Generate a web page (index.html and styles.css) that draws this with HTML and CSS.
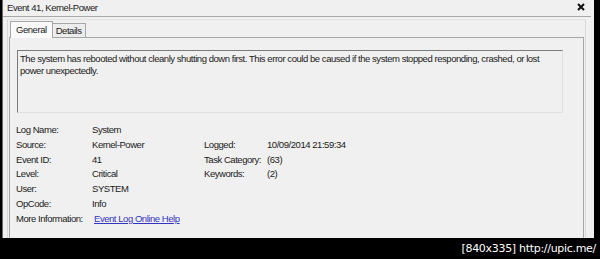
FILE: index.html
```html
<!DOCTYPE html>
<html>
<head>
<meta charset="utf-8">
<link rel="stylesheet" href="styles.css">
</head>
<body>
<div class="screen">
  <div class="window">
    <div class="titlebar">
      <span class="title">Event 41, Kernel-Power</span>
      <svg class="close" width="8" height="8" viewBox="0 0 8 8"><path d="M1 1 L7 7 M7 1 L1 7" stroke="#111" stroke-width="2"/></svg>
    </div>
    <div class="frame">
      <div class="tabs">
        <div class="tab active">General</div>
        <div class="tab">Details</div>
      </div>
      <div class="panel">
        <div class="desc">The system has rebooted without cleanly shutting down first. This error could be caused if the system stopped responding, crashed, or lost power unexpectedly.</div>
        <div class="info">
          <span>Log Name:</span><span>System</span><span></span><span></span>
          <span>Source:</span><span>Kernel-Power</span><span>Logged:</span><span>10/09/2014 21:59:34</span>
          <span>Event ID:</span><span>41</span><span>Task Category:</span><span>(63)</span>
          <span>Level:</span><span>Critical</span><span>Keywords:</span><span>(2)</span>
          <span>User:</span><span>SYSTEM</span><span></span><span></span>
          <span>OpCode:</span><span>Info</span><span></span><span></span>
          <span>More Information:</span><a class="link" href="#">Event Log Online Help</a><span></span><span></span>
        </div>
      </div>
    </div>
  </div>
  <div class="footer"><span class="wm">[840x335] http://upic.me/</span></div>
</div>
</body>
</html>
```
FILE: styles.css
```css
* { box-sizing: border-box; }
html, body { margin: 0; padding: 0; background: #000; }
body { width: 600px; height: 259px; overflow: hidden; font-family: "Liberation Sans", Arial, sans-serif; font-size: 9.5px; letter-spacing: -0.45px; color: #1a1a1a; }
.screen { width: 600px; height: 259px; display: flex; flex-direction: column; }
.window { margin-left: 2px; width: 592px; height: 238px; background: #f0f0f0; border-left: 1px solid #6a6a6a; display: flex; flex-direction: column; }
.titlebar { height: 17px; border-bottom: 1px solid #a8a8a8; margin-right: 3px; display: flex; align-items: center; justify-content: space-between; padding: 0 6px 1px 4px; }
.title { font-size: 9.5px; }
.close { margin-top: -2px; }
.frame { flex: 1; margin: 2px 8px 0 4px; border-left: 1px solid #d8d8d8; border-right: 1px solid #d8d8d8; border-top: 1px solid #e4e4e4; padding: 0 0 0 1px; display: flex; flex-direction: column; }
.tabs { display: flex; align-items: flex-end; padding-left: 1px; height: 17px; }
.tab { border: 1px solid #a6a6a6; border-bottom: none; padding: 0 3px; height: 14px; line-height: 13px; background: #ededed; }
.tab.active { height: 17px; line-height: 15px; padding: 0 5px; background: #fafafa; position: relative; top: 1px; }
.tab + .tab { border-left: none; }
.panel { flex: 1; border: 1px solid #a6a6a6; border-bottom: none; background: #f0f0f0; margin-right: 1px; padding: 12px 20px 0 7px; }
.desc { height: 63px; border-top: 1px solid #7a7a7a; border-left: 1px solid #7a7a7a; border-right: 1px solid #e0e0e0; border-bottom: 1px solid #e0e0e0; padding: 2px 12px 2px 2px; line-height: 12px; }
.info { display: grid; grid-template-columns: 76px 112px 63px auto; grid-auto-rows: 14.8px; margin-top: 10px; margin-left: -1px; }
.info span, .info a { line-height: 14px; }
.link { color: #3434c0; text-decoration: underline; margin-left: 2px; }
.footer { flex: 1; display: flex; justify-content: flex-end; align-items: center; padding-right: 4px; }
.wm { color: #fff; font-family: "DejaVu Sans", sans-serif; font-size: 11px; letter-spacing: -0.3px; }
```
